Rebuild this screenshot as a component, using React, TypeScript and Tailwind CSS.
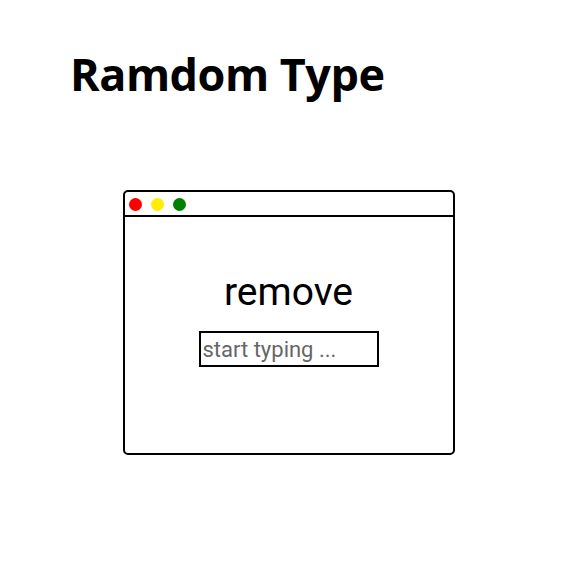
import React from "react";

export default function App() {
  return (
    <div className="w-[577px] h-[576px] bg-white pt-[44px]" style={{ fontFamily: "Roboto, sans-serif" }}>
      {/* Title */}
      <h1
        className="pl-[70px] text-[45px] leading-[60px] font-bold text-black tracking-[-0.5px]"
        style={{ fontFamily: '"Open Sans", sans-serif' }}
      >
        Ramdom Type
      </h1>

      {/* Window */}
      <div className="mx-auto mt-[86px] w-[332px] h-[265px] border-2 border-black rounded-[5px] flex flex-col">
        <div className="h-[25px] border-b-2 border-black flex items-center gap-[9px] pl-[4px] pt-[1px]">
          <span className="w-[13px] h-[13px] rounded-full bg-[#ff0000]" />
          <span className="w-[13px] h-[13px] rounded-full bg-[#ffee00]" />
          <span className="w-[13px] h-[13px] rounded-full bg-[#008000]" />
        </div>
        <div className="flex flex-col items-center pt-[50px]">
          <p className="text-[39px] leading-[50px] text-black">remove</p>
          <input
            className="mt-[14px] w-[180px] h-[36px] border-2 border-black px-[2px] text-[22px] text-black placeholder:text-[#666666] outline-none"
            placeholder="start typing ..."
          />
        </div>
      </div>
    </div>
  );
}
